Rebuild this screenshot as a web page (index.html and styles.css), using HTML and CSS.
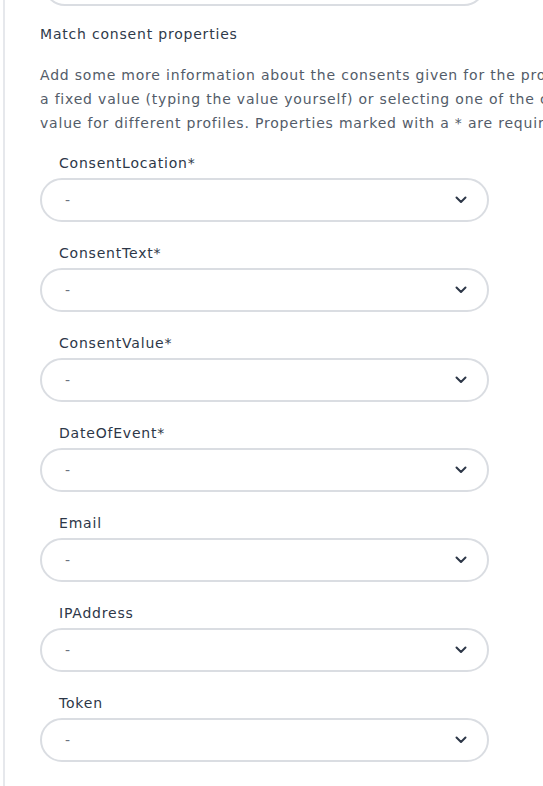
FILE: index.html
```html
<!DOCTYPE html>
<html>
<head>
<meta charset="utf-8">
<link rel="stylesheet" href="styles.css">
</head>
<body>
<div class="panel">
  <div class="select select-top"></div>
  <h3 class="title">Match consent properties</h3>
  <p class="desc">Add some more information about the consents given for the profiles. You can do this by entering<br>a fixed value (typing the value yourself) or selecting one of the columns in your file to use a different<br>value for different profiles. Properties marked with a * are required.</p>
  <div class="fields">
    <div class="field"><label class="label">ConsentLocation*</label><div class="select"><span class="value">-</span><svg class="chev" viewBox="0 0 12 8" width="12" height="8"><path d="M1.5 1.5 L6 6 L10.5 1.5" fill="none" stroke="#2d3748" stroke-width="2" stroke-linecap="round" stroke-linejoin="round"/></svg></div></div>
    <div class="field"><label class="label">ConsentText*</label><div class="select"><span class="value">-</span><svg class="chev" viewBox="0 0 12 8" width="12" height="8"><path d="M1.5 1.5 L6 6 L10.5 1.5" fill="none" stroke="#2d3748" stroke-width="2" stroke-linecap="round" stroke-linejoin="round"/></svg></div></div>
    <div class="field"><label class="label">ConsentValue*</label><div class="select"><span class="value">-</span><svg class="chev" viewBox="0 0 12 8" width="12" height="8"><path d="M1.5 1.5 L6 6 L10.5 1.5" fill="none" stroke="#2d3748" stroke-width="2" stroke-linecap="round" stroke-linejoin="round"/></svg></div></div>
    <div class="field"><label class="label">DateOfEvent*</label><div class="select"><span class="value">-</span><svg class="chev" viewBox="0 0 12 8" width="12" height="8"><path d="M1.5 1.5 L6 6 L10.5 1.5" fill="none" stroke="#2d3748" stroke-width="2" stroke-linecap="round" stroke-linejoin="round"/></svg></div></div>
    <div class="field"><label class="label">Email</label><div class="select"><span class="value">-</span><svg class="chev" viewBox="0 0 12 8" width="12" height="8"><path d="M1.5 1.5 L6 6 L10.5 1.5" fill="none" stroke="#2d3748" stroke-width="2" stroke-linecap="round" stroke-linejoin="round"/></svg></div></div>
    <div class="field"><label class="label">IPAddress</label><div class="select"><span class="value">-</span><svg class="chev" viewBox="0 0 12 8" width="12" height="8"><path d="M1.5 1.5 L6 6 L10.5 1.5" fill="none" stroke="#2d3748" stroke-width="2" stroke-linecap="round" stroke-linejoin="round"/></svg></div></div>
    <div class="field"><label class="label">Token</label><div class="select"><span class="value">-</span><svg class="chev" viewBox="0 0 12 8" width="12" height="8"><path d="M1.5 1.5 L6 6 L10.5 1.5" fill="none" stroke="#2d3748" stroke-width="2" stroke-linecap="round" stroke-linejoin="round"/></svg></div></div>
  </div>
</div>
</body>
</html>
```

FILE: styles.css
```css
html, body {
  margin: 0;
  padding: 0;
  background: #ffffff;
  overflow: hidden;
}
body {
  font-family: "DejaVu Sans", "Noto Sans", sans-serif;
  color: #2d3748;
  width: 543px;
  height: 786px;
}
.panel {
  margin-left: 3px;
  border-left: 2px solid #e6e8ec;
  height: 860px;
  padding-left: 35px;
  box-sizing: border-box;
}
.select {
  box-sizing: border-box;
  width: 449px;
  height: 44px;
  border: 2px solid #dadde2;
  border-radius: 22px;
  display: flex;
  align-items: center;
  justify-content: space-between;
  padding: 0 20px 0 23px;
  background: #fff;
}
.select-top {
  width: 443px;
  margin: -38px 0 0 3px;
}
.title {
  margin: 18px 0 0 0;
  font-size: 14px;
  font-weight: normal;
  line-height: 20px;
  letter-spacing: 0.8px;
  color: #2f3a4a;
}
.desc {
  margin: 19px 0 0 0;
  font-size: 14px;
  line-height: 24px;
  letter-spacing: 0.8px;
  color: #535c69;
  white-space: nowrap;
}
.fields {
  margin-top: 19px;
  display: flex;
  flex-direction: column;
  gap: 22px;
}
.field {
  display: flex;
  flex-direction: column;
  gap: 5px;
}
.label {
  padding-left: 19px;
  font-size: 14px;
  line-height: 19px;
  letter-spacing: 0.8px;
  color: #2d3748;
}
.value {
  font-size: 14px;
  color: #6b7280;
}
.chev {
  display: block;
}
```
